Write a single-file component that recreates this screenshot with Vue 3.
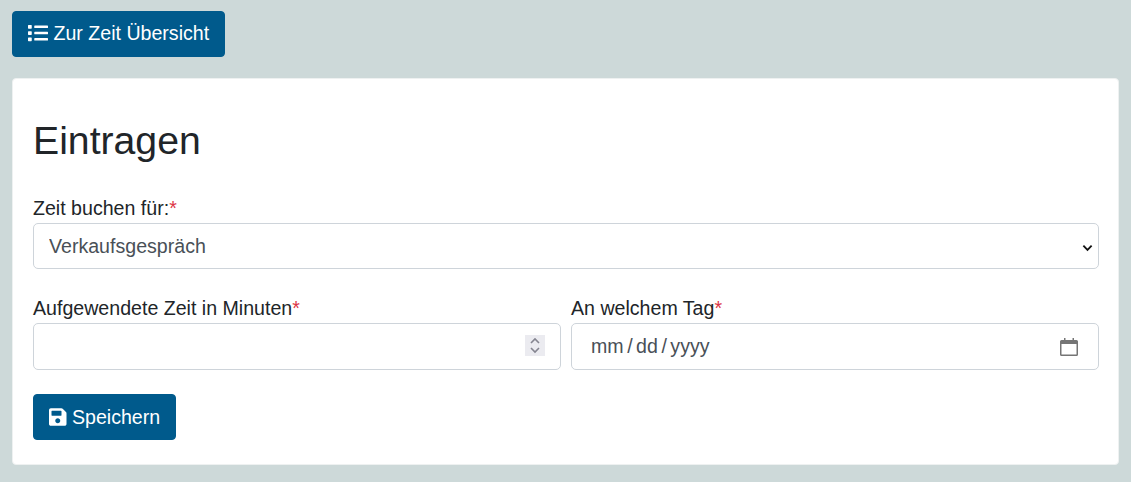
<script setup>
import { ref } from 'vue';

const aufgabe = ref('Verkaufsgespräch');
const aufgaben = ['Verkaufsgespräch', 'Beratung', 'Verwaltung'];
</script>

<template>
  <div class="seite">
    <button class="knopf knopf-oben" type="button">
      <svg class="icon" viewBox="0 0 512 512" width="20" height="20" aria-hidden="true">
        <path fill="currentColor" d="M80 368H16a16 16 0 0 0-16 16v64a16 16 0 0 0 16 16h64a16 16 0 0 0 16-16v-64a16 16 0 0 0-16-16zm0-320H16A16 16 0 0 0 0 64v64a16 16 0 0 0 16 16h64a16 16 0 0 0 16-16V64a16 16 0 0 0-16-16zm0 160H16a16 16 0 0 0-16 16v64a16 16 0 0 0 16 16h64a16 16 0 0 0 16-16v-64a16 16 0 0 0-16-16zm416 176H176a16 16 0 0 0-16 16v32a16 16 0 0 0 16 16h320a16 16 0 0 0 16-16v-32a16 16 0 0 0-16-16zm0-320H176a16 16 0 0 0-16 16v32a16 16 0 0 0 16 16h320a16 16 0 0 0 16-16V80a16 16 0 0 0-16-16zm0 160H176a16 16 0 0 0-16 16v32a16 16 0 0 0 16 16h320a16 16 0 0 0 16-16v-32a16 16 0 0 0-16-16z"/>
      </svg>
      Zur Zeit Übersicht
    </button>

    <form class="karte" @submit.prevent>
      <h1>Eintragen</h1>

      <div class="feld">
        <label for="aufgabe">Zeit buchen für:<span class="pflicht">*</span></label>
        <select id="aufgabe" v-model="aufgabe" class="eingabe auswahl">
          <option v-for="a in aufgaben" :key="a">{{ a }}</option>
        </select>
      </div>

      <div class="zeile">
        <div class="feld">
          <label for="minuten">Aufgewendete Zeit in Minuten<span class="pflicht">*</span></label>
          <input id="minuten" class="eingabe" type="number" />
        </div>
        <div class="feld">
          <label for="tag">An welchem Tag<span class="pflicht">*</span></label>
          <input id="tag" class="eingabe datum" type="date" />
        </div>
      </div>

      <button class="knopf" type="submit">
        <svg class="icon" viewBox="0 0 448 512" width="17.5" height="20" aria-hidden="true">
          <path fill="currentColor" d="M433.941 129.941l-83.882-83.882A48 48 0 0 0 316.118 32H48C21.49 32 0 53.49 0 80v352c0 26.51 21.49 48 48 48h352c26.51 0 48-21.49 48-48V163.882a48 48 0 0 0-14.059-33.941zM224 416c-35.346 0-64-28.654-64-64 0-35.346 28.654-64 64-64s64 28.654 64 64c0 35.346-28.654 64-64 64zm96-304.520V212c0 6.627-5.373 12-12 12H76c-6.627 0-12-5.373-12-12V108c0-6.627 5.373-12 12-12h228.520c3.183 0 6.235 1.264 8.485 3.515l3.480 3.480A11.996 11.996 0 0 1 320 111.480z"/>
        </svg>
        Speichern
      </button>
    </form>
  </div>
</template>

<style>
html,
body {
  margin: 0;
  background: #cdd9d9;
}
</style>

<style scoped>
.seite {
  box-sizing: border-box;
  height: 482px;
  padding: 11px 12px 0;
  font-family: "Liberation Sans", Arial, sans-serif;
  font-size: 19.6px;
  line-height: 29px;
  color: #212529;
}

.knopf {
  display: block;
  box-sizing: border-box;
  height: 46px;
  padding: 0 15px;
  border: 1px solid #005a8c;
  border-radius: 4px;
  background: #005a8c;
  color: #fff;
  font: inherit;
}

.knopf-oben {
  padding-bottom: 2px;
}

.icon {
  vertical-align: -3px;
}

.karte {
  box-sizing: border-box;
  height: 387px;
  margin-top: 21px;
  padding: 39px 19px 0 20px;
  border: 1px solid #eef1f1;
  border-radius: 4px;
  background: #fff;
}

h1 {
  margin: 0 0 32px;
  font-size: 39.2px;
  font-weight: 500;
  line-height: 45px;
}

.feld {
  display: flex;
  flex-direction: column;
}

label {
  line-height: 27px;
  margin-bottom: 1px;
}

.pflicht {
  color: #dc3545;
}

.eingabe {
  box-sizing: border-box;
  width: 100%;
  height: 47px;
  padding: 0 15px;
  border: 1px solid #ced4da;
  border-radius: 5px;
  background: #fff;
  color: #495057;
  font: inherit;
}

.auswahl {
  height: 46px;
  appearance: none;
  background: #fff url("data:image/svg+xml,%3Csvg xmlns='http://www.w3.org/2000/svg' viewBox='0 0 12 8'%3E%3Cpath fill='none' stroke='%23111' stroke-width='2' d='M1.5 1.5 6 6l4.500-4.500'/%3E%3C/svg%3E") no-repeat right 5px top 20px / 11px 8px;
}

.datum {
  padding-left: 18px;
  padding-right: 20px;
}

.datum::-webkit-datetime-edit-text {
  padding: 0 2.5px;
}

.datum::-webkit-calendar-picker-indicator {
  width: 19px;
  height: 19px;
  padding: 0;
  margin: 0;
  background: url("data:image/svg+xml,%3Csvg xmlns='http://www.w3.org/2000/svg' viewBox='0 0 18 18'%3E%3Cpath fill='%23757575' d='M4 0h1.500v2h7V0H14v2h2.500A1.500 1.500 0 0 1 18 3.500v13a1.500 1.500 0 0 1-1.500 1.500h-15A1.500 1.500 0 0 1 0 16.500v-13A1.500 1.500 0 0 1 1.500 2H4zM1.500 6v10.500h15V6z'/%3E%3C/svg%3E") no-repeat center / 18px 18px;
}

.eingabe[type="number"]::-webkit-inner-spin-button {
  appearance: none;
  opacity: 1;
  width: 20px;
  height: 21px;
  margin: 0;
  background: #ebebf0 url("data:image/svg+xml,%3Csvg xmlns='http://www.w3.org/2000/svg' viewBox='0 0 20 21'%3E%3Cpath fill='none' stroke='%23858590' stroke-width='1.600' d='M6 8l4-4 4 4M6 13l4 4 4-4'/%3E%3C/svg%3E") no-repeat center;
}

.zeile {
  display: grid;
  grid-template-columns: 1fr 1fr;
  gap: 10px;
  margin-top: 26px;
  margin-bottom: 24px;
}
</style>
